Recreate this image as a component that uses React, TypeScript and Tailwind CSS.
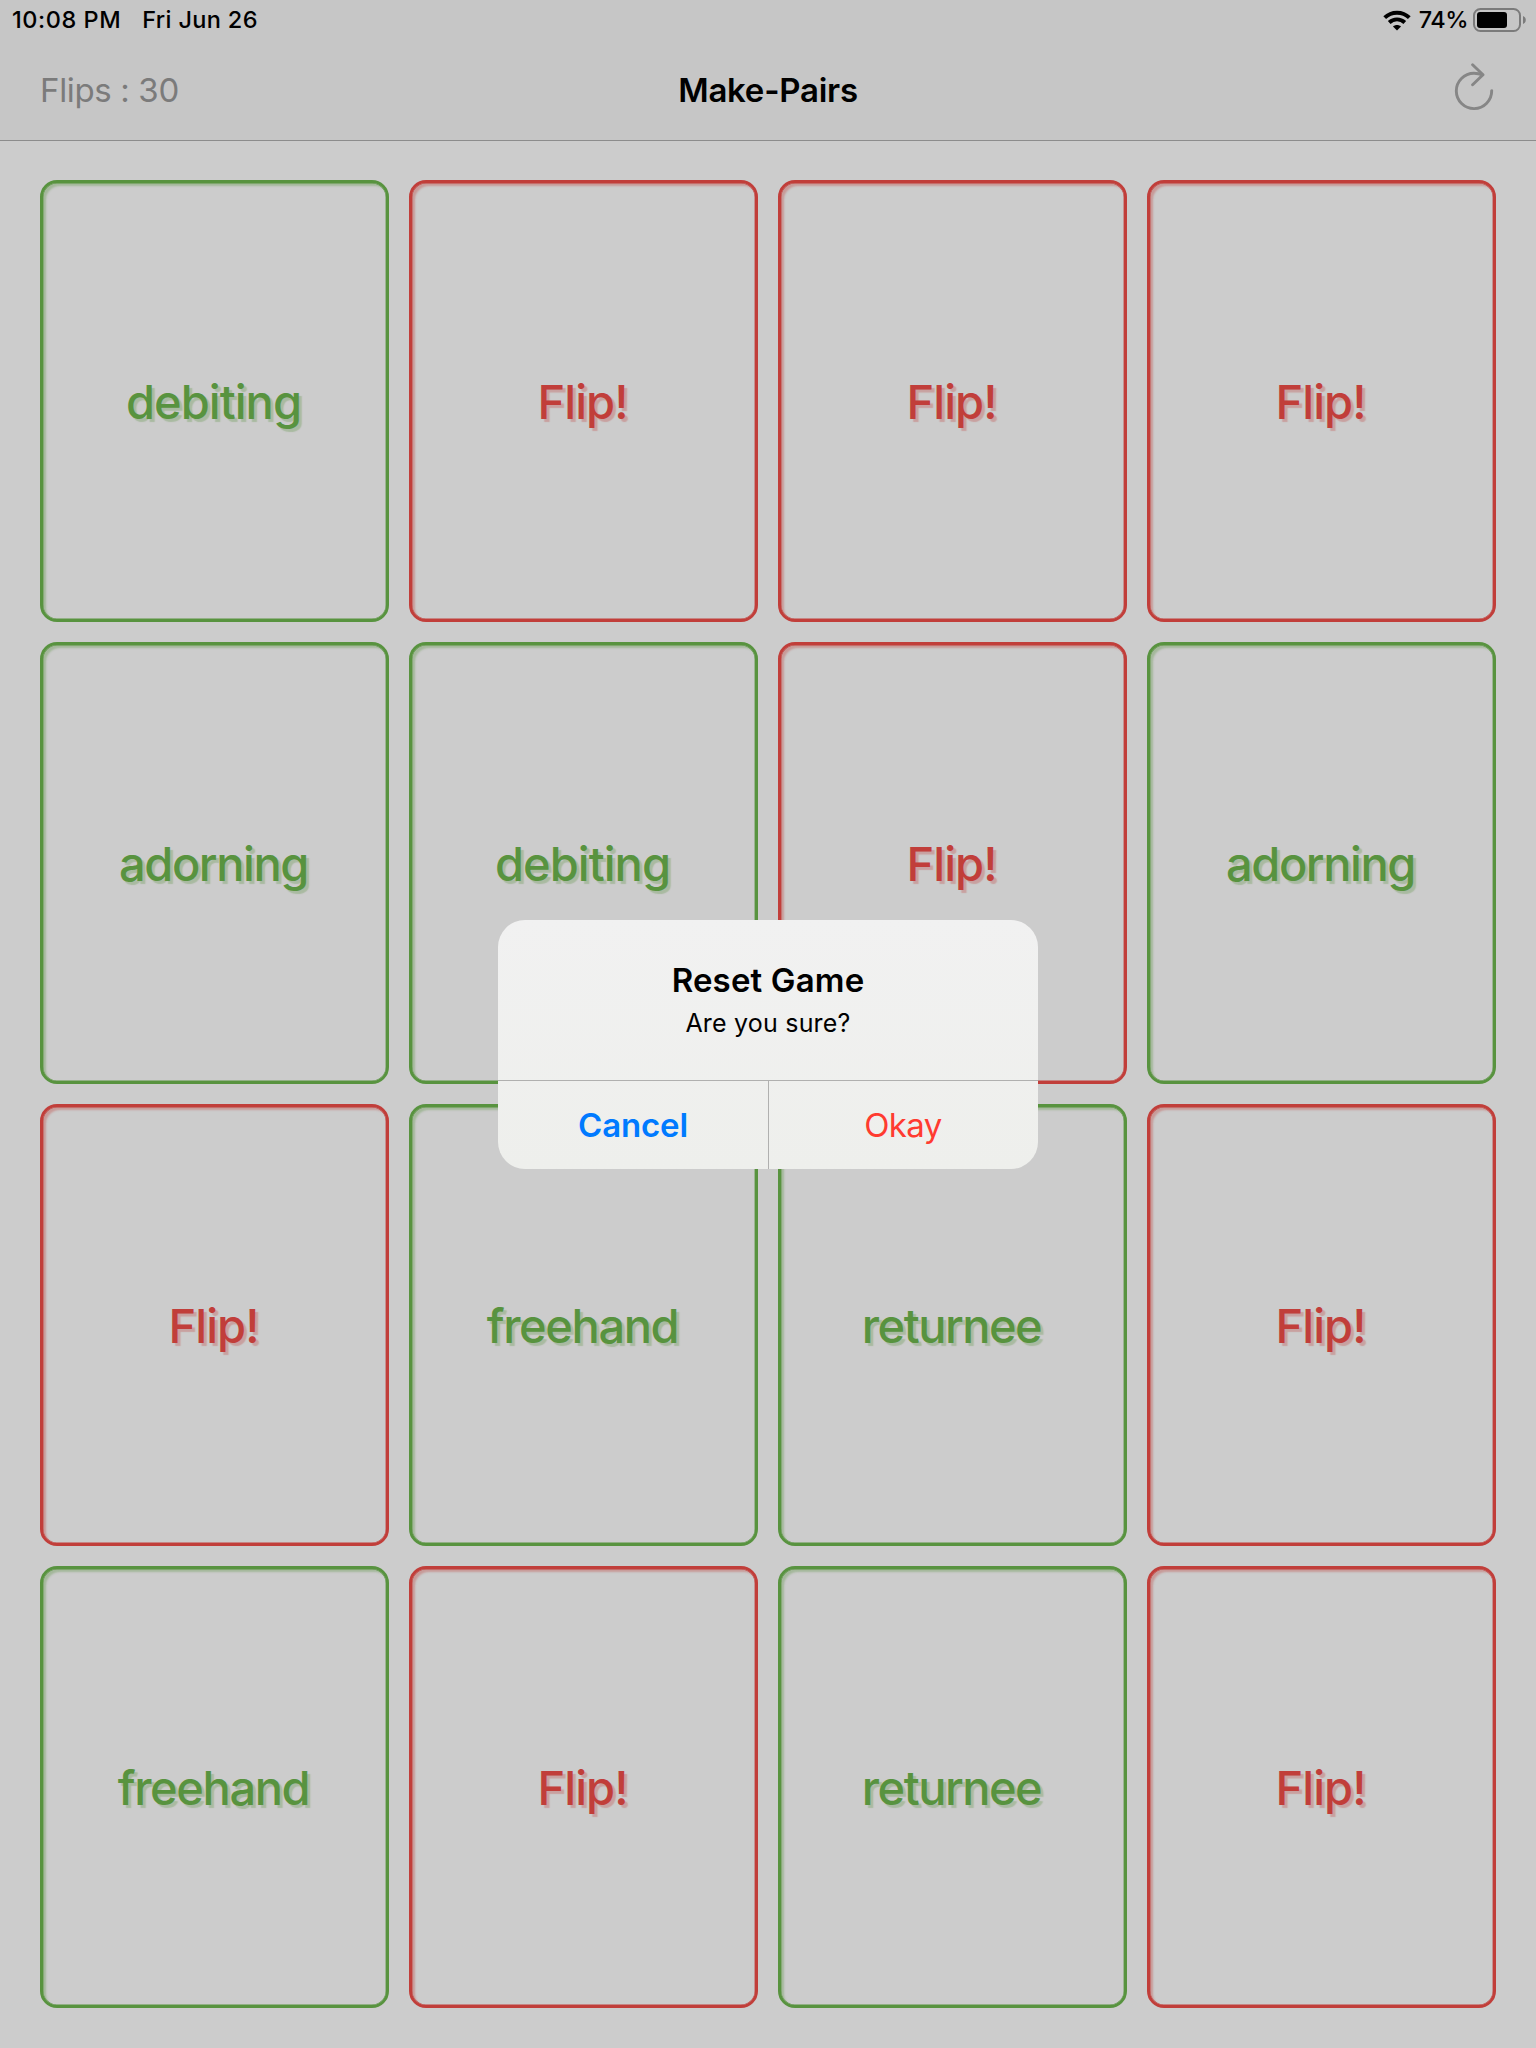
type Card = { word: string; open: boolean; tracking: string };

const debiting: Card = { word: "debiting", open: true, tracking: "tracking-[-0.95px]" };
const adorning: Card = { word: "adorning", open: true, tracking: "tracking-[-1.45px]" };
const freehand: Card = { word: "freehand", open: true, tracking: "tracking-[-1.4px]" };
const returnee: Card = { word: "returnee", open: true, tracking: "tracking-[-1.5px]" };
const hidden: Card = { word: "Flip!", open: false, tracking: "tracking-[-0.95px]" };

const cards: Card[] = [
  debiting, hidden, hidden, hidden,
  adorning, debiting, hidden, adorning,
  hidden, freehand, returnee, hidden,
  freehand, hidden, returnee, hidden,
];

function GameCard({ card }: { card: Card }) {
  const tone = card.open
    ? "border-[#58933f] text-[#58933f] shadow-[inset_0_0_0_0.4px_#58933f,inset_3px_3px_2px_rgba(88,147,63,0.35)] [text-shadow:3px_3px_1px_rgba(88,147,63,0.3)]"
    : "border-[#c13e3a] text-[#c13e3a] shadow-[inset_0_0_0_0.4px_#c13e3a,inset_3px_3px_2px_rgba(193,62,58,0.35)] [text-shadow:3px_3px_1px_rgba(193,62,58,0.3)]";
  return (
    <button className={`flex items-center justify-center rounded-[17px] border-3 pr-[2px] text-[47px] leading-none font-medium ${card.tracking} ${tone}`}>
      {card.word}
    </button>
  );
}

function WifiIcon() {
  return (
    <svg className="h-[21px] w-[28px]" viewBox="0 0 28 21" fill="none" stroke="#000" strokeWidth="3.9">
      <path d="M1.7 7.7C8.4 1 19.6 1 26.3 7.7" />
      <path d="M6.2 12.5C10.6 8.3 17.4 8.3 21.8 12.5" />
      <path d="M14 20.6L10 16.6C12.2 14.6 15.8 14.6 18 16.6Z" fill="#000" stroke="none" />
    </svg>
  );
}

function BatteryIcon() {
  return (
    <svg className="h-[24px] w-[53px]" viewBox="0 0 53 24" fill="none">
      <rect x="1" y="1" width="46" height="22" rx="6.5" stroke="#7b7b7b" strokeWidth="2" />
      <rect x="4" y="4" width="30" height="16" rx="3" fill="#000" />
      <path d="M50 8C53.7 9.2 53.7 14.8 50 16Z" fill="#7b7b7b" />
    </svg>
  );
}

function ResetIcon() {
  return (
    <svg className="mr-px h-[48px] w-[40px]" viewBox="0 0 40 48" fill="none" stroke="#868686" strokeWidth="2.9" strokeLinecap="round" strokeLinejoin="round">
      <path d="M37.7 27.6A17.7 17.7 0 1 1 20 10.2C23.5 10.2 26 10.8 28.6 11.8" />
      <path d="M18.6 1.8L29 11.8L18.6 21.8" />
    </svg>
  );
}

export default function App() {
  return (
    <div className="relative flex h-[2048px] w-[1536px] flex-col overflow-hidden bg-[#cccccc] font-['Inter',sans-serif]">
      <header className="flex h-[141px] flex-col border-b border-[#8c8c8c] bg-[#c6c6c6] text-black">
        <div className="flex h-[40px] items-center justify-between pr-[10px] pl-[12px] text-[23.5px] leading-none font-medium">
          <div className="flex gap-[21px]">
            <span className="tracking-[0.55px]">10:08 PM</span>
            <span className="tracking-[0.35px]">Fri Jun 26</span>
          </div>
          <div className="flex items-center">
            <WifiIcon />
            <span className="mr-[5px] ml-[8px] tracking-[-0.5px]">74%</span>
            <BatteryIcon />
          </div>
        </div>
        <div className="grid h-[100px] grid-cols-3 items-center pr-[41px] pl-10 text-[33px] leading-none">
          <span className="tracking-[-0.35px] text-[#7b7b7b]">Flips : 30</span>
          <h1 className="pl-px text-center font-semibold tracking-[-0.25px]">Make-Pairs</h1>
          <div className="flex -translate-y-[3px] justify-end">
            <ResetIcon />
          </div>
        </div>
      </header>

      <main className="grid flex-1 grid-cols-4 grid-rows-4 gap-5 px-10 pt-[39px] pb-10">
        {cards.map((card, i) => (
          <GameCard key={i} card={card} />
        ))}
      </main>

      <div className="absolute top-[920px] left-[498px] flex h-[249px] w-[540px] flex-col overflow-hidden rounded-[27px] bg-linear-to-b from-[#f1f1f1] to-[#eeefec] text-black">
        <div className="flex h-[160px] flex-col items-center pt-[44px]">
          <h2 className="text-[33px] leading-[33px] font-semibold tracking-[0.15px]">Reset Game</h2>
          <p className="mt-[14px] text-[25px] leading-[25px] tracking-[0.2px]">Are you sure?</p>
        </div>
        <div className="grid flex-1 grid-cols-2 border-t border-[#b0b0af] text-[33px] leading-none">
          <button className="font-semibold tracking-[-0.15px] text-[#007aff]">Cancel</button>
          <button className="border-l border-[#b0b0af] pr-px tracking-[-0.6px] text-[#ff3b30]">Okay</button>
        </div>
      </div>
    </div>
  );
}
